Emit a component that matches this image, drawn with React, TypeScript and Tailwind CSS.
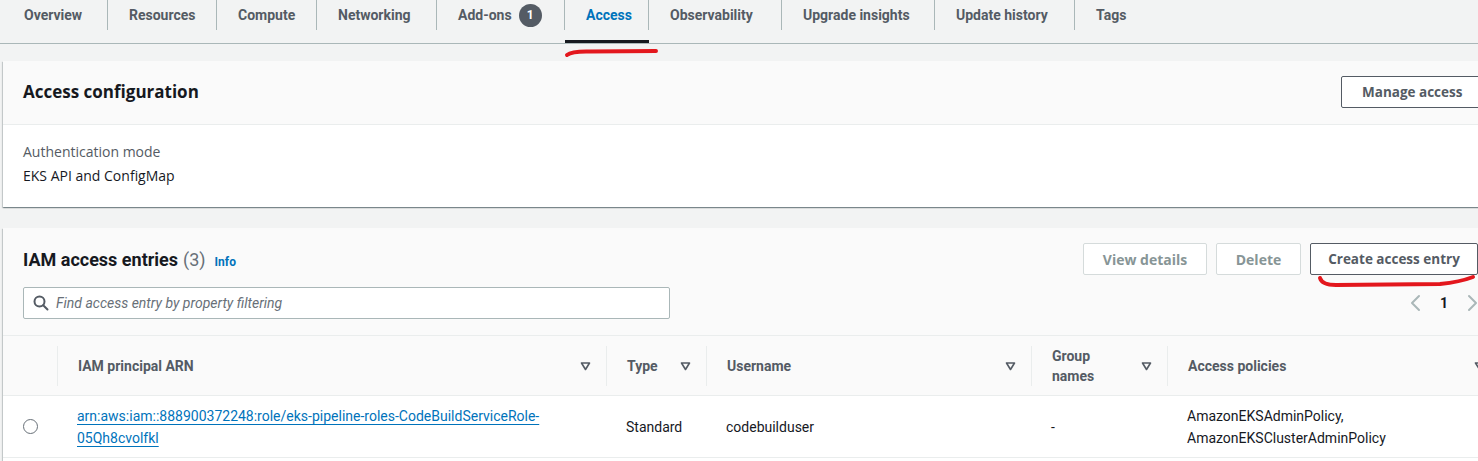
import React from 'react';

const tabs = [
  { label: 'Overview', w: 'w-[105px]' },
  { label: 'Resources', w: 'w-[109px]' },
  { label: 'Compute', w: 'w-[100px]' },
  { label: 'Networking', w: 'w-[120px]' },
  { label: 'Add-ons', w: 'w-[128px]', badge: 1 },
  { label: 'Access', w: 'w-[84px]', active: true },
  { label: 'Observability', w: 'w-[133px]' },
  { label: 'Upgrade insights', w: 'w-[153px]' },
  { label: 'Update history', w: 'w-[140px]' },
  { label: 'Tags', w: 'w-[80px]', last: true },
];

const panelShadow =
  'shadow-[0_1px_1px_0_rgba(0,28,36,0.3),1px_1px_1px_0_rgba(0,28,36,0.15),-1px_1px_1px_0_rgba(0,28,36,0.15)]';

const SortIcon = () => (
  <svg width="11" height="10" viewBox="0 0 11 10" className="shrink-0">
    <path d="M1.5 2 H9.5 L5.5 8.5 Z" fill="none" stroke="#545b64" strokeWidth="1.6" strokeLinejoin="round" />
  </svg>
);

const Chevron = ({ dir }: { dir: 'left' | 'right' }) => (
  <svg width="12" height="18" viewBox="0 0 12 18">
    <path
      d={dir === 'left' ? 'M10 2 L3 9 L10 16' : 'M2 2 L9 9 L2 16'}
      fill="none"
      stroke="#aab7b8"
      strokeWidth="2"
      strokeLinecap="round"
      strokeLinejoin="round"
    />
  </svg>
);

const HeaderCell = ({ children }: { children: React.ReactNode }) => (
  <th className="p-0 align-middle font-bold">
    <div className="flex items-center justify-between h-[40px] pl-5 pr-[15px] border-l border-[#eaeded]">
      <span className="text-left leading-[20px]">{children}</span>
      <SortIcon />
    </div>
  </th>
);

const App: React.FC = () => {
  return (
    <div className="relative w-[1478px] h-[461px] overflow-hidden bg-[#f2f3f3] text-[14px] text-[#16191f] font-[Roboto,sans-serif]">
      {/* tabs */}
      <div className="flex h-[44px] pl-[3px] border-b border-[#aab7b8] w-[1478px]">
        {tabs.map(t => (
          <div
            key={t.label}
            className={`${t.w} h-[43px] shrink-0 flex flex-col border-b-[3px] ${t.active ? 'border-[#16191f]' : 'border-transparent'}`}
          >
            <div
              className={`h-[30px] flex items-center pl-[21px] font-bold ${t.last ? '' : 'border-r border-[#aab7b8]'} ${t.active ? 'text-[#0073bb]' : 'text-[#545b64]'}`}
            >
              {t.label}
              {t.badge && (
                <span className="ml-[7px] w-[23px] h-[23px] rounded-full bg-[#545b64] text-white text-[12px] flex items-center justify-center">
                  {t.badge}
                </span>
              )}
            </div>
          </div>
        ))}
      </div>

      {/* access configuration */}
      <div className={`ml-[3px] mt-[17px] w-[1500px] bg-white ${panelShadow}`}>
        <div className="flex items-center justify-between bg-[#fafafa] pl-5 pr-[20px] pt-[15px] pb-[16px] border-b border-[#eaeded]">
          <h2 className="font-['Open_Sans',sans-serif] font-bold text-[17px] leading-[22px]">Access configuration</h2>
          <button className="h-[32px] w-[142px] border border-[#545b64] rounded-[2px] bg-white font-['Open_Sans',sans-serif] font-bold text-[13.5px] text-[#545b64] text-left pl-5">
            Manage access
          </button>
        </div>
        <div className="px-5 pt-[17px] pb-[21px] font-['Open_Sans',sans-serif] leading-[20px]">
          <div className="text-[#545b64]">Authentication mode</div>
          <div className="mt-[4px]">EKS API and ConfigMap</div>
        </div>
      </div>

      {/* IAM access entries */}
      <div className={`ml-[3px] mt-[21px] w-[1494px] bg-white ${panelShadow}`}>
        <div className="bg-[#fafafa] pl-5 pr-[19px] pt-[15px] pb-[16px]">
          <div className="flex items-center justify-between">
            <div className="flex items-baseline">
              <h2 className="font-bold text-[18px] leading-[22px]">IAM access entries</h2>
              <span className="ml-[5px] text-[18px] text-[#687078]">(3)</span>
              <span className="ml-[9px] text-[12px] font-bold text-[#0073bb]">Info</span>
            </div>
            <div className="flex gap-[9px] font-['Open_Sans',sans-serif] font-bold">
              <button className="h-[32px] w-[124px] border border-[#d5dbdb] rounded-[2px] bg-white text-[#879596]">View details</button>
              <button className="h-[32px] w-[85px] border border-[#d5dbdb] rounded-[2px] bg-white text-[#879596]">Delete</button>
              <button className="h-[32px] w-[168px] border border-[#545b64] rounded-[2px] bg-white text-[#545b64] text-[13.5px]">Create access entry</button>
            </div>
          </div>
          <div className="flex items-center justify-between mt-[12px]">
            <div className="flex items-center w-[647px] h-[32px] border border-[#aab7b8] rounded-[2px] bg-white pl-[9px]">
              <svg width="16" height="16" viewBox="0 0 16 16">
                <circle cx="6.5" cy="6.5" r="5" fill="none" stroke="#545b64" strokeWidth="2" />
                <path d="M10.2 10.2 L14.5 14.5" stroke="#545b64" strokeWidth="2" strokeLinecap="round" />
              </svg>
              <span className="ml-[7px] italic text-[#687078]">Find access entry by property filtering</span>
            </div>
            <div className="flex items-center gap-[19px] mr-[-1px]">
              <Chevron dir="left" />
              <span className="font-bold text-[#16191f] w-[8px] text-center">1</span>
              <Chevron dir="right" />
            </div>
          </div>
        </div>

        <table className="table-fixed border-collapse w-[1497px]">
          <colgroup>
            <col className="w-[54px]" />
            <col className="w-[549px]" />
            <col className="w-[100px]" />
            <col className="w-[325px]" />
            <col className="w-[136px]" />
            <col />
          </colgroup>
          <thead>
            <tr className="bg-[#fafafa] h-[60px] border-t border-b border-[#eaeded] text-[#545b64]">
              <th className="p-0"></th>
              <HeaderCell>IAM principal ARN</HeaderCell>
              <HeaderCell>Type</HeaderCell>
              <HeaderCell>Username</HeaderCell>
              <HeaderCell>
                Group
                <br />
                names
              </HeaderCell>
              <HeaderCell>Access policies</HeaderCell>
            </tr>
          </thead>
          <tbody>
            <tr className="h-[62px] border-b border-[#eaeded] leading-[22px]">
              <td className="p-0 align-middle">
                <span className="block ml-[20px] w-[15px] h-[15px] rounded-full border-[1.5px] border-[#687078] bg-white"></span>
              </td>
              <td className="pl-5 align-middle">
                <a className="text-[#0073bb] underline underline-offset-[3px] decoration-1">
                  arn:aws:iam::888900372248:role/eks-pipeline-roles-CodeBuildServiceRole-
                  <br />
                  05Qh8cvolfkl
                </a>
              </td>
              <td className="pl-5 align-middle">Standard</td>
              <td className="pl-5 align-middle">codebuilduser</td>
              <td className="pl-5 align-middle">-</td>
              <td className="pl-5 align-middle">
                AmazonEKSAdminPolicy,
                <br />
                AmazonEKSClusterAdminPolicy
              </td>
            </tr>
            <tr className="h-[40px]">
              <td colSpan={6}></td>
            </tr>
          </tbody>
        </table>
      </div>

      {/* red pen marks */}
      <svg className="absolute inset-0 pointer-events-none" width="1478" height="461">
        <path d="M567 55 Q572 51 590 51.5 L656 51" fill="none" stroke="#e3171d" strokeWidth="4" strokeLinecap="round" />
        <path d="M1320 278 Q1322 285 1336 285 L1440 284 Q1460 282 1473 277" fill="none" stroke="#e3171d" strokeWidth="4" strokeLinecap="round" />
      </svg>
    </div>
  );
};

export default App;
